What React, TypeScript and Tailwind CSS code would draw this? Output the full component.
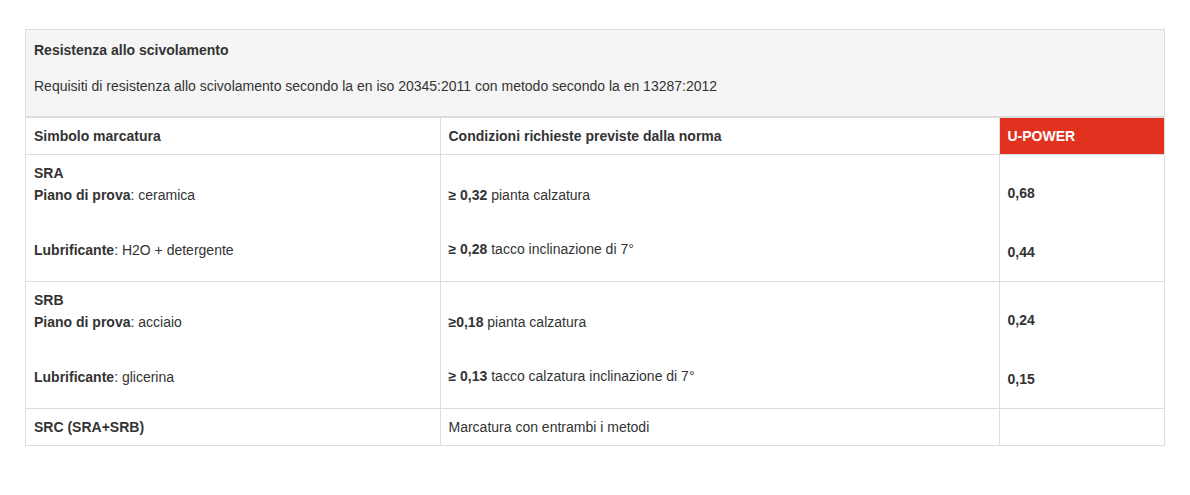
const font = { fontFamily: '"Liberation Sans", Arial, sans-serif' };

function Label({ name, value }: { name: string; value: string }) {
  return (
    <div>
      <strong className="font-bold">{name}</strong>: {value}
    </div>
  );
}

function Cond({ min, text }: { min: string; text: string }) {
  return (
    <div>
      <strong className="font-bold">{min}</strong> {text}
    </div>
  );
}

interface RowData {
  code: string;
  plane: string;
  lube: string;
  cond1: [string, string];
  cond2: [string, string];
  val1: string;
  val2: string;
}

const rows: RowData[] = [
  {
    code: "SRA",
    plane: "ceramica",
    lube: "H2O + detergente",
    cond1: ["≥ 0,32", "pianta calzatura"],
    cond2: ["≥ 0,28", "tacco inclinazione di 7°"],
    val1: "0,68",
    val2: "0,44",
  },
  {
    code: "SRB",
    plane: "acciaio",
    lube: "glicerina",
    cond1: ["≥0,18", "pianta calzatura"],
    cond2: ["≥ 0,13", "tacco calzatura inclinazione di 7°"],
    val1: "0,24",
    val2: "0,15",
  },
];

export default function App() {
  return (
    <div className="min-h-screen bg-white pt-[29px] px-[25px] text-[14px] leading-[22px] text-[#333]" style={font}>
      <div className="w-[1140px] border border-[#ddd]">
        <div className="bg-[#f5f5f5] px-2 pt-[9px] pb-[19px] border-b-2 border-[#ddd]">
          <div className="font-bold">Resistenza allo scivolamento</div>
          <div className="mt-[14px]">
            Requisiti di resistenza allo scivolamento secondo la en iso 20345:2011 con metodo secondo la en 13287:2012
          </div>
        </div>

        <table className="w-full table-fixed border-collapse">
          <colgroup>
            <col className="w-[414px]" />
            <col className="w-[559px]" />
            <col />
          </colgroup>
          <thead>
            <tr className="h-[36px] border-b border-[#ddd] text-left">
              <th className="px-2 font-bold border-r border-[#ddd]">Simbolo marcatura</th>
              <th className="px-2 font-bold border-r border-[#ddd]">Condizioni richieste previste dalla norma</th>
              <th className="px-2 font-bold bg-[#e0321f] text-white">U-POWER</th>
            </tr>
          </thead>
          <tbody>
            {rows.map((r) => (
              <tr key={r.code} className="h-[127px] border-b border-[#ddd] align-top">
                <td className="px-2 pt-[7px] border-r border-[#ddd]">
                  <div className="font-bold">{r.code}</div>
                  <Label name="Piano di prova" value={r.plane} />
                  <div className="mt-[33px]">
                    <Label name="Lubrificante" value={r.lube} />
                  </div>
                </td>
                <td className="px-2 pt-[29px] border-r border-[#ddd]">
                  <Cond min={r.cond1[0]} text={r.cond1[1]} />
                  <div className="mt-[32px]">
                    <Cond min={r.cond2[0]} text={r.cond2[1]} />
                  </div>
                </td>
                <td className="px-2 pt-[27px] font-bold">
                  <div>{r.val1}</div>
                  <div className="mt-[37px]">{r.val2}</div>
                </td>
              </tr>
            ))}
            <tr className="h-[37px]">
              <td className="px-2 font-bold border-r border-[#ddd]">SRC (SRA+SRB)</td>
              <td className="px-2 border-r border-[#ddd]">Marcatura con entrambi i metodi</td>
              <td className="px-2"></td>
            </tr>
          </tbody>
        </table>
      </div>
    </div>
  );
}
